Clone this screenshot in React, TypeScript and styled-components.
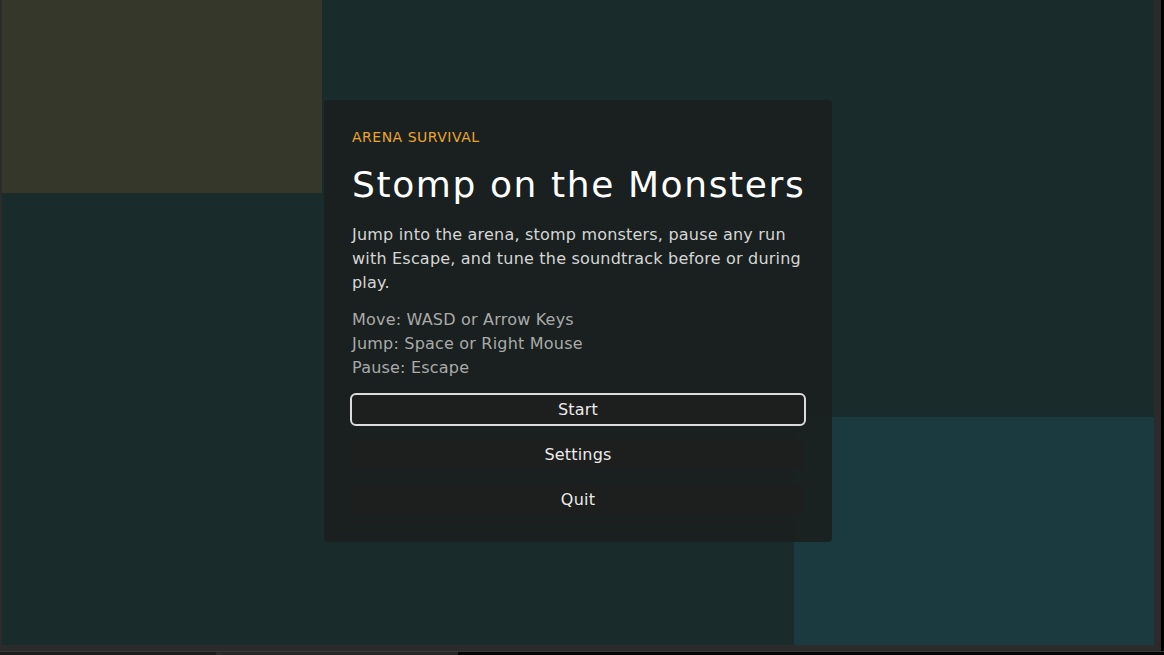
import React from "react";
import styled, { createGlobalStyle } from "styled-components";

const GlobalStyle = createGlobalStyle`
  html, body {
    margin: 0;
    padding: 0;
    background: #000;
    overflow: hidden;
  }
  * {
    box-sizing: border-box;
  }
`;

const font = `"DejaVu Sans", "Noto Sans", sans-serif`;

const Frame = styled.div`
  width: 1164px;
  height: 655px;
  display: flex;
  flex-direction: column;
  background: #2b2b2b;
`;

const Viewport = styled.div`
  display: flex;
  height: 651px;
  padding: 0 7px 6px 2px;
  border-right: 3px solid #000;
`;

const Arena = styled.div`
  position: relative;
  flex: 1;
  display: flex;
  align-items: center;
  justify-content: center;
  background: #1a2b2b;
  overflow: hidden;
`;

const Block = styled.div<{ $color: string }>`
  position: absolute;
  background: ${({ $color }) => $color};
`;

const Panel = styled.section`
  position: relative;
  width: 508px;
  padding: 28px;
  margin-bottom: 3px;
  border-radius: 4px;
  background: rgba(26, 31, 30, 0.9);
  font-family: ${font};
`;

const Eyebrow = styled.div`
  color: #eaa532;
  font-size: 14px;
  line-height: 18px;
  letter-spacing: 0.5px;
  text-transform: uppercase;
`;

const Title = styled.h1`
  margin: 17px 0 16px;
  color: #ffffff;
  font-size: 36px;
  font-weight: 400;
  line-height: 44px;
  letter-spacing: 1.6px;
  white-space: nowrap;
`;

const Lead = styled.p`
  margin: 0 0 13px;
  color: #d6d6d6;
  font-size: 16px;
  line-height: 24px;
  letter-spacing: 0.2px;
`;

const Controls = styled.ul`
  margin: 0 0 15px;
  padding: 0;
  list-style: none;
  color: #a9aaaa;
  font-size: 16px;
  line-height: 24px;
  letter-spacing: 0.2px;
`;

const Menu = styled.div`
  display: flex;
  flex-direction: column;
  gap: 16px;
`;

const MenuButton = styled.button<{ $focused?: boolean }>`
  height: 29px;
  border: none;
  border-radius: 4px;
  background: #1d1e1e;
  color: #ececec;
  font-family: ${font};
  font-size: 16px;
  letter-spacing: 0.2px;
  cursor: pointer;
  outline: ${({ $focused }) => ($focused ? "2px solid #dcdcdc" : "none")};
  outline-offset: 0;
`;

const BottomBar = styled.div`
  display: flex;
  height: 4px;
  border-top: 1px solid #3a3a3a;
`;

const BarPart = styled.div<{ $w: number; $color: string }>`
  width: ${({ $w }) => $w}px;
  background: ${({ $color }) => $color};
`;

const controls = [
  "Move: WASD or Arrow Keys",
  "Jump: Space or Right Mouse",
  "Pause: Escape",
];

export default function App() {
  return (
    <>
      <GlobalStyle />
      <Frame>
        <Viewport>
          <Arena>
            <Block $color="#35372a" style={{ left: 0, top: 0, width: 320, height: 193 }} />
            <Block $color="#1b3a3f" style={{ left: 792, top: 417, width: 360, height: 228 }} />
            <Panel>
              <Eyebrow>Arena Survival</Eyebrow>
              <Title>Stomp on the Monsters</Title>
              <Lead>
                Jump into the arena, stomp monsters, pause any run with Escape,
                and tune the soundtrack before or during play.
              </Lead>
              <Controls>
                {controls.map((c) => (
                  <li key={c}>{c}</li>
                ))}
              </Controls>
              <Menu>
                <MenuButton $focused>Start</MenuButton>
                <MenuButton>Settings</MenuButton>
                <MenuButton>Quit</MenuButton>
              </Menu>
            </Panel>
          </Arena>
        </Viewport>
        <BottomBar>
          <BarPart $w={216} $color="#1c1c1c" />
          <BarPart $w={6} $color="#2b2b2b" />
          <BarPart $w={236} $color="#262626" />
          <BarPart $w={706} $color="#050505" />
        </BottomBar>
      </Frame>
    </>
  );
}
